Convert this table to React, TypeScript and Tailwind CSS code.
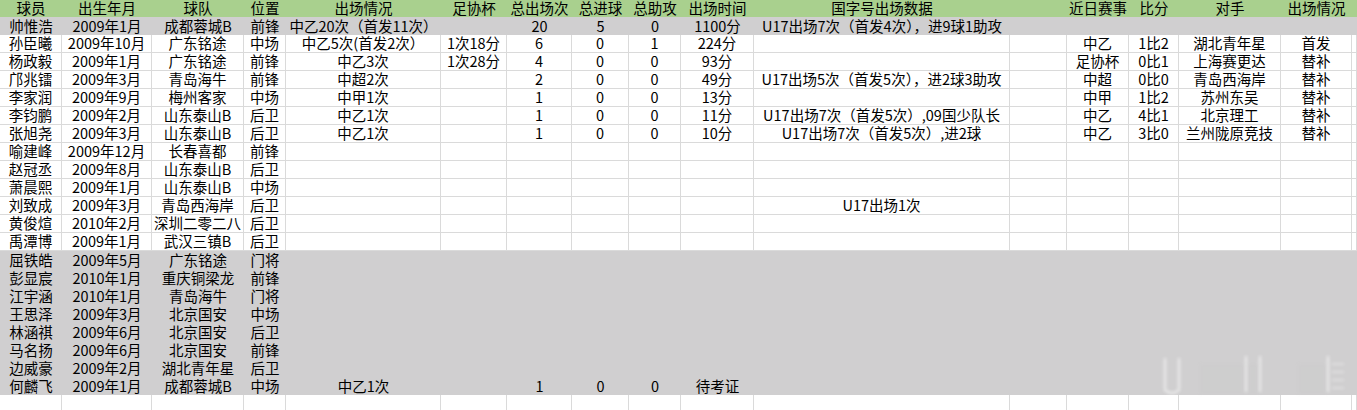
import React from "react";

const W = [
  "w-[62px]",
  "w-[90px]",
  "w-[92px]",
  "w-[42px]",
  "w-[155px]",
  "w-[66px]",
  "w-[65px]",
  "w-[57px]",
  "w-[52px]",
  "w-[73px]",
  "w-[256px]",
  "w-[57px]",
  "w-[62px]",
  "w-[50px]",
  "w-[102px]",
  "w-[71px]",
  "flex-1",
];

const header = [
  "球员",
  "出生年月",
  "球队",
  "位置",
  "出场情况",
  "足协杯",
  "总出场次",
  "总进球",
  "总助攻",
  "出场时间",
  "国字号出场数据",
  "",
  "近日赛事",
  "比分",
  "对手",
  "出场情况",
  "",
];

type Row = { grey?: boolean; cells: string[] };

const e = (n: number) => Array.from({ length: n }, () => "");

const rows: Row[] = [
  {
    grey: true,
    cells: ["帅惟浩", "2009年1月", "成都蓉城B", "前锋", "中乙20次（首发11次）", "", "20", "5", "0", "1100分", "U17出场7次（首发4次），进9球1助攻", ...e(6)],
  },
  { cells: ["孙臣曦", "2009年10月", "广东铭途", "中场", "中乙5次(首发2次）", "1次18分", "6", "0", "1", "224分", "", "", "中乙", "1比2", "湖北青年星", "首发", ""] },
  { cells: ["杨政毅", "2009年1月", "广东铭途", "前锋", "中乙3次", "1次28分", "4", "0", "0", "93分", "", "", "足协杯", "0比1", "上海赛更达", "替补", ""] },
  { cells: ["邝兆镭", "2009年3月", "青岛海牛", "前锋", "中超2次", "", "2", "0", "0", "49分", "U17出场5次（首发5次），进2球3助攻", "", "中超", "0比0", "青岛西海岸", "替补", ""] },
  { cells: ["李家润", "2009年9月", "梅州客家", "中场", "中甲1次", "", "1", "0", "0", "13分", "", "", "中甲", "1比2", "苏州东吴", "替补", ""] },
  { cells: ["李钧鹏", "2009年2月", "山东泰山B", "后卫", "中乙1次", "", "1", "0", "0", "11分", "U17出场7次（首发5次）,09国少队长", "", "中乙", "4比1", "北京理工", "替补", ""] },
  { cells: ["张旭尧", "2009年3月", "山东泰山B", "后卫", "中乙1次", "", "1", "0", "0", "10分", "U17出场7次（首发5次）,进2球", "", "中乙", "3比0", "兰州陇原竞技", "替补", ""] },
  { cells: ["喻建峰", "2009年12月", "长春喜都", "前锋", ...e(13)] },
  { cells: ["赵冠丞", "2009年8月", "山东泰山B", "后卫", ...e(13)] },
  { cells: ["萧晨熙", "2009年1月", "山东泰山B", "中场", ...e(13)] },
  { cells: ["刘致成", "2009年3月", "青岛西海岸", "后卫", "", "", "", "", "", "", "U17出场1次", ...e(6)] },
  { cells: ["黄俊煊", "2010年2月", "深圳二零二八", "后卫", ...e(13)] },
  { cells: ["禹潭博", "2009年1月", "武汉三镇B", "后卫", ...e(13)] },
  { grey: true, cells: ["屈铁皓", "2009年5月", "广东铭途", "门将", ...e(13)] },
  { grey: true, cells: ["彭显宸", "2010年1月", "重庆铜梁龙", "前锋", ...e(13)] },
  { grey: true, cells: ["江宇涵", "2010年1月", "青岛海牛", "门将", ...e(13)] },
  { grey: true, cells: ["王思泽", "2009年3月", "北京国安", "中场", ...e(13)] },
  { grey: true, cells: ["林涵祺", "2009年6月", "北京国安", "后卫", ...e(13)] },
  { grey: true, cells: ["马名扬", "2009年6月", "北京国安", "前锋", ...e(13)] },
  { grey: true, cells: ["边威豪", "2009年2月", "湖北青年星", "后卫", ...e(13)] },
  { grey: true, cells: ["何麟飞", "2009年1月", "成都蓉城B", "中场", "中乙1次", "", "1", "0", "0", "待考证", ...e(7)] },
  { cells: e(17) },
];

function Cell({ w, text, lined }: { w: string; text: string; lined: boolean }) {
  return (
    <div
      className={`${w} shrink-0 h-full flex items-center justify-center whitespace-nowrap overflow-visible ${
        lined ? "border-r border-b border-[#dadada]" : ""
      }`}
    >
      <span className="leading-none">{text}</span>
    </div>
  );
}

export default function App() {
  return (
    <div
      className="relative w-[1357px] h-[410px] overflow-hidden bg-white text-black text-[14.5px]"
      style={{ fontFamily: '"Noto Sans CJK SC", "Noto Sans", sans-serif' }}
    >
      <div className="flex h-[17px] bg-[#a9d08e]">
        {header.map((h, i) => (
          <Cell key={i} w={W[i]} text={h} lined={false} />
        ))}
      </div>
      {rows.map((r, ri) => (
        <div key={ri} className={`flex h-[18px] ${r.grey ? "bg-[#d0cfd0]" : "bg-white"}`}>
          {r.cells.map((c, ci) => (
            <Cell key={ci} w={W[ci]} text={c} lined={!r.grey} />
          ))}
        </div>
      ))}
      <svg
        className="absolute left-[1150px] top-[350px] pointer-events-none"
        width="200"
        height="48"
        viewBox="0 0 200 48"
      >
        <defs>
          <filter id="bl" x="-20%" y="-20%" width="140%" height="140%">
            <feGaussianBlur stdDeviation="1.4" />
          </filter>
        </defs>
        <g filter="url(#bl)" opacity="0.5">
          <rect x="50" y="14" width="60" height="30" fill="#c4c4c4" opacity="0.3" />
          <rect x="148" y="14" width="30" height="30" fill="#c4c4c4" opacity="0.3" />
          <path d="M15 8 V40 Q22 46 29 40 V8" stroke="#ffffff" strokeWidth="2.5" fill="none" />
          <line x1="96" y1="6" x2="96" y2="42" stroke="#ffffff" strokeWidth="2.5" />
          <line x1="110" y1="6" x2="110" y2="42" stroke="#ffffff" strokeWidth="2.5" />
          <line x1="178" y1="6" x2="178" y2="42" stroke="#ffffff" strokeWidth="2.5" />
          <line x1="182" y1="14" x2="194" y2="14" stroke="#ffffff" strokeWidth="1.2" />
          <line x1="182" y1="22" x2="194" y2="22" stroke="#ffffff" strokeWidth="1.2" />
          <line x1="182" y1="30" x2="194" y2="30" stroke="#ffffff" strokeWidth="1.2" />
          <line x1="182" y1="38" x2="194" y2="38" stroke="#ffffff" strokeWidth="1.2" />
        </g>
      </svg>
    </div>
  );
}
